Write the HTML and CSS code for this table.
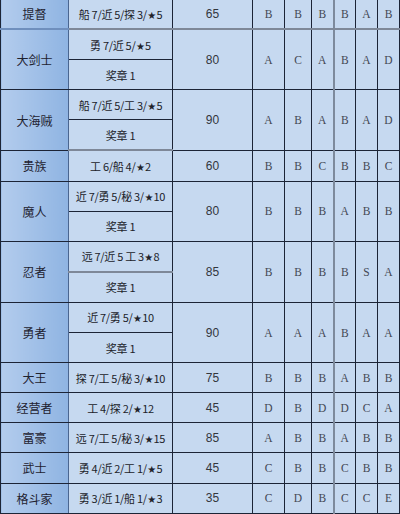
FILE: index.html
```html
<!DOCTYPE html>
<html lang="zh">
<head>
<meta charset="utf-8">
<link rel="stylesheet" href="styles.css">
</head>
<body>
<table class="grid">
  <colgroup>
    <col class="c-name"><col class="c-req"><col class="c-num">
    <col class="c-g1"><col class="c-g2"><col class="c-g"><col class="c-g"><col class="c-g"><col class="c-g">
  </colgroup>
  <tbody>
    <tr class="r first">
      <td class="name">提督</td><td class="req">船 7/近 5/探 3/<span class="st">★</span>5</td><td class="num">65</td>
      <td class="g">B</td><td class="g">B</td><td class="g">B</td><td class="g sep">B</td><td class="g">A</td><td class="g">B</td>
    </tr>
    <tr class="r">
      <td class="name" rowspan="2">大剑士</td><td class="req">勇 7/近 5/<span class="st">★</span>5</td><td class="num" rowspan="2">80</td>
      <td class="g" rowspan="2">A</td><td class="g" rowspan="2">C</td><td class="g" rowspan="2">A</td><td class="g sep" rowspan="2">B</td><td class="g" rowspan="2">A</td><td class="g" rowspan="2">D</td>
    </tr>
    <tr class="r"><td class="req">奖章 1</td></tr>
    <tr class="r">
      <td class="name" rowspan="2">大海贼</td><td class="req">船 7/近 5/工 3/<span class="st">★</span>5</td><td class="num" rowspan="2">90</td>
      <td class="g" rowspan="2">A</td><td class="g" rowspan="2">B</td><td class="g" rowspan="2">A</td><td class="g sep" rowspan="2">B</td><td class="g" rowspan="2">A</td><td class="g" rowspan="2">D</td>
    </tr>
    <tr class="r soft"><td class="req">奖章 1</td></tr>
    <tr class="r">
      <td class="name">贵族</td><td class="req">工 6/船 4/<span class="st">★</span>2</td><td class="num">60</td>
      <td class="g">B</td><td class="g">B</td><td class="g">C</td><td class="g sep">B</td><td class="g">B</td><td class="g">C</td>
    </tr>
    <tr class="r">
      <td class="name" rowspan="2">魔人</td><td class="req">近 7/勇 5/秘 3/<span class="st">★</span>10</td><td class="num" rowspan="2">80</td>
      <td class="g" rowspan="2">B</td><td class="g" rowspan="2">B</td><td class="g" rowspan="2">B</td><td class="g sep" rowspan="2">A</td><td class="g" rowspan="2">B</td><td class="g" rowspan="2">B</td>
    </tr>
    <tr class="r"><td class="req">奖章 1</td></tr>
    <tr class="r">
      <td class="name" rowspan="2">忍者</td><td class="req soft-b">远 7/近 5 工 3<span class="st">★</span>8</td><td class="num" rowspan="2">85</td>
      <td class="g" rowspan="2">B</td><td class="g" rowspan="2">B</td><td class="g" rowspan="2">B</td><td class="g sep" rowspan="2">B</td><td class="g" rowspan="2">S</td><td class="g" rowspan="2">A</td>
    </tr>
    <tr class="r"><td class="req">奖章 1</td></tr>
    <tr class="r">
      <td class="name" rowspan="2">勇者</td><td class="req">近 7/勇 5/<span class="st">★</span>10</td><td class="num" rowspan="2">90</td>
      <td class="g" rowspan="2">A</td><td class="g" rowspan="2">A</td><td class="g" rowspan="2">A</td><td class="g sep" rowspan="2">B</td><td class="g" rowspan="2">A</td><td class="g" rowspan="2">A</td>
    </tr>
    <tr class="r"><td class="req">奖章 1</td></tr>
    <tr class="r">
      <td class="name">大王</td><td class="req">探 7/工 5/秘 3/<span class="st">★</span>10</td><td class="num">75</td>
      <td class="g">B</td><td class="g">B</td><td class="g">B</td><td class="g sep">A</td><td class="g">B</td><td class="g">B</td>
    </tr>
    <tr class="r">
      <td class="name">经营者</td><td class="req">工 4/探 2/<span class="st">★</span>12</td><td class="num">45</td>
      <td class="g">D</td><td class="g">B</td><td class="g">D</td><td class="g sep">D</td><td class="g">C</td><td class="g">A</td>
    </tr>
    <tr class="r">
      <td class="name">富豪</td><td class="req">远 7/工 5/秘 3/<span class="st">★</span>15</td><td class="num">85</td>
      <td class="g">A</td><td class="g">B</td><td class="g">B</td><td class="g sep">A</td><td class="g">B</td><td class="g">B</td>
    </tr>
    <tr class="r">
      <td class="name">武士</td><td class="req">勇 4/近 2/工 1/<span class="st">★</span>5</td><td class="num">45</td>
      <td class="g">C</td><td class="g">B</td><td class="g">B</td><td class="g sep">C</td><td class="g">B</td><td class="g">B</td>
    </tr>
    <tr class="r">
      <td class="name">格斗家</td><td class="req">勇 3/近 1/船 1/<span class="st">★</span>3</td><td class="num">35</td>
      <td class="g">C</td><td class="g">D</td><td class="g">B</td><td class="g sep">C</td><td class="g">C</td><td class="g">E</td>
    </tr>
  </tbody>
</table>
</body>
</html>
```
FILE: styles.css
```css
html, body {
  margin: 0;
  padding: 0;
  background: #e4ebf4;
}
body {
  width: 400px;
  height: 514px;
  overflow: hidden;
}
.grid {
  border-collapse: collapse;
  table-layout: fixed;
  width: 400px;
  margin-top: -2px;
  background: #c6d9f0;
}
.c-name { width: 68px; }
.c-req { width: 104px; }
.c-num { width: 80px; }
.c-g1 { width: 32px; }
.c-g2 { width: 27px; }
.c-g { width: 22px; }
.grid td {
  border: 1px solid #1c2436;
  padding: 0;
  text-align: center;
  vertical-align: middle;
  height: 29.1px;
  white-space: nowrap;
  overflow: hidden;
}
.name {
  background: linear-gradient(to right, #b3cced, #8fb4e2);
  font-family: "Noto Sans CJK SC", "Noto Sans", sans-serif;
  font-size: 12px;
  color: #1e2230;
  border-right-color: #4a6690 !important;
}
.req {
  font-family: "Noto Sans CJK SC", "Noto Sans", sans-serif;
  font-size: 11px;
  letter-spacing: -0.3px;
  color: #202229;
}
.st {
  font-family: "DejaVu Sans", sans-serif;
  font-size: 10px;
  margin: 0 0.5px;
}
.num {
  font-family: "Liberation Sans", Arial, sans-serif;
  font-size: 12px;
  color: #33363d;
}
.g {
  font-family: "Liberation Serif", "DejaVu Serif", serif;
  font-size: 11.5px;
  color: #434753;
}
.grid td.sep { border-left: 2px solid #7d8a9c; }
.grid tr.first td { border-bottom: 2px solid #7e8898; }
.grid tr.first td.name { border-bottom-color: #6f8fbd; }
.grid tr.soft td { border-bottom: 2px solid #7e8898; }
.grid td.soft-b { border-bottom: 2px solid #7e8898; }
```
